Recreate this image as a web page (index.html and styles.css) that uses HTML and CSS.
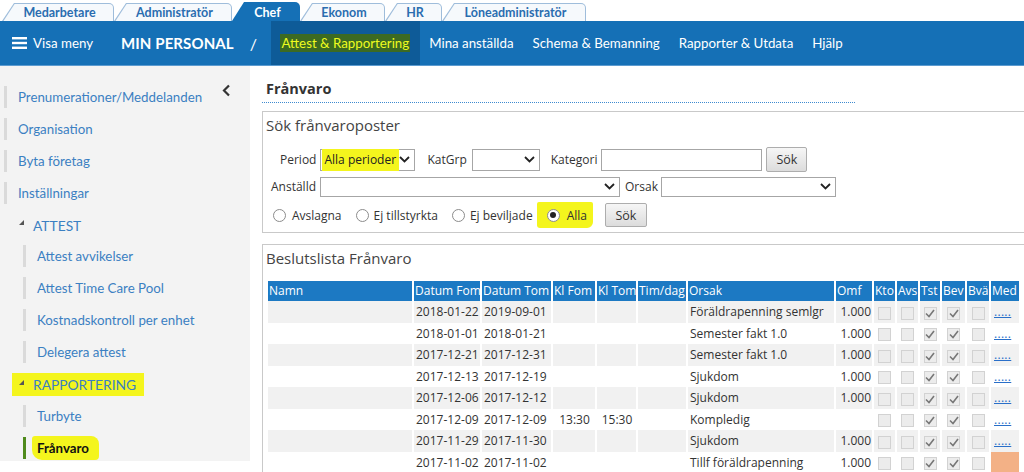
FILE: index.html
```html
<!DOCTYPE html>
<html lang="sv">
<head>
<meta charset="utf-8">
<title>Frånvaro</title>
<link rel="stylesheet" href="styles.css">
</head>
<body>
<div class="tabs">
  <div class="tab t-med"><div class="tab-face">Medarbetare</div></div>
  <div class="tab t-adm"><div class="tab-face">Administratör</div></div>
  <div class="tab t-chef active"><div class="tab-face">Chef</div></div>
  <div class="tab t-eko"><div class="tab-face">Ekonom</div></div>
  <div class="tab t-hr"><div class="tab-face">HR</div></div>
  <div class="tab t-lon"><div class="tab-face">Löneadministratör</div></div>
</div>
<nav class="nav">
  <div class="menu-btn">
    <svg class="burger" width="15" height="12" viewBox="0 0 15 12"><rect x="0" y="0" width="15" height="2.4" fill="#fff"/><rect x="0" y="4.8" width="15" height="2.4" fill="#fff"/><rect x="0" y="9.6" width="15" height="2.4" fill="#fff"/></svg>
    <span>Visa meny</span>
  </div>
  <div class="brand">MIN PERSONAL</div>
  <div class="slash">/</div>
  <ul class="nav-links">
    <li class="nav-item active"><span class="nav-hl">Attest &amp; Rapportering</span></li>
    <li class="nav-item">Mina anställda</li>
    <li class="nav-item">Schema &amp; Bemanning</li>
    <li class="nav-item">Rapporter &amp; Utdata</li>
    <li class="nav-item">Hjälp</li>
  </ul>
</nav>
<div class="main">
  <aside class="sidebar">
    <ul class="side-list">
      <li class="side-item">Prenumerationer/Meddelanden</li>
      <li class="side-item">Organisation</li>
      <li class="side-item">Byta företag</li>
      <li class="side-item">Inställningar</li>
      <li class="side-head"><span class="tri"></span>ATTEST</li>
      <li class="side-item sub">Attest avvikelser</li>
      <li class="side-item sub">Attest Time Care Pool</li>
      <li class="side-item sub">Kostnadskontroll per enhet</li>
      <li class="side-item sub">Delegera attest</li>
      <li class="side-head marked"><span class="tri"></span>RAPPORTERING</li>
      <li class="side-item sub">Turbyte</li>
      <li class="side-item sub current"><span class="cur-hl">Frånvaro</span></li>
    </ul>
    <div class="collapse">
      <svg width="9" height="13" viewBox="0 0 9 13"><polyline points="7,1.5 2,6.5 7,11.5" fill="none" stroke="#333" stroke-width="2.2"/></svg>
    </div>
  </aside>
  <section class="content">
    <h1 class="page-title">Frånvaro</h1>

    <div class="panel search">
      <div class="panel-title">Sök frånvaroposter</div>
      <div class="form-row r1">
        <label class="lbl">Period</label>
        <div class="sel w-period"><span class="sel-val"><span class="mark">Alla perioder</span></span><svg class="chev" width="11" height="7" viewBox="0 0 11 7"><polyline points="1,1 5.5,5.5 10,1" fill="none" stroke="#222" stroke-width="1.8"/></svg></div>
        <label class="lbl l-katgrp">KatGrp</label>
        <div class="sel w-katgrp"><span class="sel-val"></span><svg class="chev" width="11" height="7" viewBox="0 0 11 7"><polyline points="1,1 5.5,5.5 10,1" fill="none" stroke="#222" stroke-width="1.8"/></svg></div>
        <label class="lbl l-kat">Kategori</label>
        <div class="inp w-kat"></div>
        <button class="btn">Sök</button>
      </div>
      <div class="form-row r2">
        <label class="lbl">Anställd</label>
        <div class="sel w-anst"><span class="sel-val"></span><svg class="chev" width="11" height="7" viewBox="0 0 11 7"><polyline points="1,1 5.5,5.5 10,1" fill="none" stroke="#222" stroke-width="1.8"/></svg></div>
        <label class="lbl l-orsak">Orsak</label>
        <div class="sel w-orsak"><span class="sel-val"></span><svg class="chev" width="11" height="7" viewBox="0 0 11 7"><polyline points="1,1 5.5,5.5 10,1" fill="none" stroke="#222" stroke-width="1.8"/></svg></div>
      </div>
      <div class="form-row r3">
        <span class="radio-opt"><span class="radio"></span><span class="rlabel">Avslagna</span></span>
        <span class="radio-opt"><span class="radio"></span><span class="rlabel">Ej tillstyrkta</span></span>
        <span class="radio-opt"><span class="radio"></span><span class="rlabel">Ej beviljade</span></span>
        <span class="radio-opt marked-opt"><span class="radio on"></span><span class="rlabel">Alla</span></span>
        <button class="btn btn-r3">Sök</button>
      </div>
    </div>

    <div class="panel results">
      <div class="panel-title">Beslutslista Frånvaro</div>
      <table class="grid">
        <colgroup>
          <col class="c-namn"><col class="c-dfom"><col class="c-dtom"><col class="c-klf"><col class="c-klt"><col class="c-tim"><col class="c-ors"><col class="c-omf"><col class="c-kto"><col class="c-avs"><col class="c-tst"><col class="c-bev"><col class="c-bva"><col class="c-med">
        </colgroup>
        <thead>
          <tr><th>Namn</th><th>Datum Fom</th><th>Datum Tom</th><th>Kl Fom</th><th>Kl Tom</th><th>Tim/dag</th><th>Orsak</th><th>Omf</th><th>Kto</th><th>Avs</th><th>Tst</th><th>Bev</th><th>Bvä</th><th>Med</th></tr>
        </thead>
        <tbody>
          <tr class="odd"><td></td><td>2018-01-22</td><td>2019-09-01</td><td></td><td></td><td></td><td>Föräldrapenning semlgr</td><td class="num">1.000</td><td class="cb"><span class="chk"></span></td><td class="cb"><span class="chk"></span></td><td class="cb"><span class="chk on"><svg width="10" height="9" viewBox="0 0 10 9"><polyline points="1,4.5 4,7.5 9,1" fill="none" stroke="#777" stroke-width="1.6"/></svg></span></td><td class="cb"><span class="chk on"><svg width="10" height="9" viewBox="0 0 10 9"><polyline points="1,4.5 4,7.5 9,1" fill="none" stroke="#777" stroke-width="1.6"/></svg></span></td><td class="cb"><span class="chk"></span></td><td class="med"><a class="dots">.....</a></td></tr>
          <tr><td></td><td>2018-01-01</td><td>2018-01-21</td><td></td><td></td><td></td><td>Semester fakt 1.0</td><td class="num">1.000</td><td class="cb"><span class="chk"></span></td><td class="cb"><span class="chk"></span></td><td class="cb"><span class="chk on"><svg width="10" height="9" viewBox="0 0 10 9"><polyline points="1,4.5 4,7.5 9,1" fill="none" stroke="#777" stroke-width="1.6"/></svg></span></td><td class="cb"><span class="chk on"><svg width="10" height="9" viewBox="0 0 10 9"><polyline points="1,4.5 4,7.5 9,1" fill="none" stroke="#777" stroke-width="1.6"/></svg></span></td><td class="cb"><span class="chk"></span></td><td class="med"><a class="dots">.....</a></td></tr>
          <tr class="odd"><td></td><td>2017-12-21</td><td>2017-12-31</td><td></td><td></td><td></td><td>Semester fakt 1.0</td><td class="num">1.000</td><td class="cb"><span class="chk"></span></td><td class="cb"><span class="chk"></span></td><td class="cb"><span class="chk on"><svg width="10" height="9" viewBox="0 0 10 9"><polyline points="1,4.5 4,7.5 9,1" fill="none" stroke="#777" stroke-width="1.6"/></svg></span></td><td class="cb"><span class="chk on"><svg width="10" height="9" viewBox="0 0 10 9"><polyline points="1,4.5 4,7.5 9,1" fill="none" stroke="#777" stroke-width="1.6"/></svg></span></td><td class="cb"><span class="chk"></span></td><td class="med"><a class="dots">.....</a></td></tr>
          <tr><td></td><td>2017-12-13</td><td>2017-12-19</td><td></td><td></td><td></td><td>Sjukdom</td><td class="num">1.000</td><td class="cb"><span class="chk"></span></td><td class="cb"><span class="chk"></span></td><td class="cb"><span class="chk on"><svg width="10" height="9" viewBox="0 0 10 9"><polyline points="1,4.5 4,7.5 9,1" fill="none" stroke="#777" stroke-width="1.6"/></svg></span></td><td class="cb"><span class="chk on"><svg width="10" height="9" viewBox="0 0 10 9"><polyline points="1,4.5 4,7.5 9,1" fill="none" stroke="#777" stroke-width="1.6"/></svg></span></td><td class="cb"><span class="chk"></span></td><td class="med"><a class="dots">.....</a></td></tr>
          <tr class="odd"><td></td><td>2017-12-06</td><td>2017-12-12</td><td></td><td></td><td></td><td>Sjukdom</td><td class="num">1.000</td><td class="cb"><span class="chk"></span></td><td class="cb"><span class="chk"></span></td><td class="cb"><span class="chk on"><svg width="10" height="9" viewBox="0 0 10 9"><polyline points="1,4.5 4,7.5 9,1" fill="none" stroke="#777" stroke-width="1.6"/></svg></span></td><td class="cb"><span class="chk on"><svg width="10" height="9" viewBox="0 0 10 9"><polyline points="1,4.5 4,7.5 9,1" fill="none" stroke="#777" stroke-width="1.6"/></svg></span></td><td class="cb"><span class="chk"></span></td><td class="med"><a class="dots">.....</a></td></tr>
          <tr><td></td><td>2017-12-09</td><td>2017-12-09</td><td class="ctr">13:30</td><td class="ctr">15:30</td><td></td><td>Kompledig</td><td class="num"></td><td class="cb"><span class="chk"></span></td><td class="cb"><span class="chk"></span></td><td class="cb"><span class="chk on"><svg width="10" height="9" viewBox="0 0 10 9"><polyline points="1,4.5 4,7.5 9,1" fill="none" stroke="#777" stroke-width="1.6"/></svg></span></td><td class="cb"><span class="chk on"><svg width="10" height="9" viewBox="0 0 10 9"><polyline points="1,4.5 4,7.5 9,1" fill="none" stroke="#777" stroke-width="1.6"/></svg></span></td><td class="cb"><span class="chk"></span></td><td class="med"><a class="dots">.....</a></td></tr>
          <tr class="odd"><td></td><td>2017-11-29</td><td>2017-11-30</td><td></td><td></td><td></td><td>Sjukdom</td><td class="num">1.000</td><td class="cb"><span class="chk"></span></td><td class="cb"><span class="chk"></span></td><td class="cb"><span class="chk on"><svg width="10" height="9" viewBox="0 0 10 9"><polyline points="1,4.5 4,7.5 9,1" fill="none" stroke="#777" stroke-width="1.6"/></svg></span></td><td class="cb"><span class="chk on"><svg width="10" height="9" viewBox="0 0 10 9"><polyline points="1,4.5 4,7.5 9,1" fill="none" stroke="#777" stroke-width="1.6"/></svg></span></td><td class="cb"><span class="chk"></span></td><td class="med"><a class="dots">.....</a></td></tr>
          <tr><td></td><td>2017-11-02</td><td>2017-11-02</td><td></td><td></td><td></td><td>Tillf föräldrapenning</td><td class="num">1.000</td><td class="cb"><span class="chk"></span></td><td class="cb"><span class="chk"></span></td><td class="cb"><span class="chk on"><svg width="10" height="9" viewBox="0 0 10 9"><polyline points="1,4.5 4,7.5 9,1" fill="none" stroke="#777" stroke-width="1.6"/></svg></span></td><td class="cb"><span class="chk on"><svg width="10" height="9" viewBox="0 0 10 9"><polyline points="1,4.5 4,7.5 9,1" fill="none" stroke="#777" stroke-width="1.6"/></svg></span></td><td class="cb"><span class="chk"></span></td><td class="med warn"></td></tr>
        </tbody>
      </table>
    </div>
  </section>
</div>
</body>
</html>
```
FILE: styles.css
```css
* { box-sizing: border-box; }
html, body { margin: 0; padding: 0; }
body {
  width: 1024px;
  height: 472px;
  overflow: hidden;
  background: #fff;
  font-family: "Open Sans", "Noto Sans", sans-serif;
  color: #333;
}
ul { list-style: none; margin: 0; padding: 0; }

/* ---------- role tabs ---------- */
.tabs {
  display: flex;
  align-items: flex-end;
  height: 21px;
  padding-left: 2px;
  background: #fff;
}
.tab {
  height: 18px;
  background: #9fbddb;
  padding: 1px 1px 0 0;
  border-radius: 0 5px 0 0;
  clip-path: polygon(0 100%, 12px 0, 100% 0, 100% 100%);
}
.tab-face {
  height: 100%;
  background: #f6f9fc;
  border-radius: 0 4px 0 0;
  clip-path: polygon(1.5px 100%, 12.6px 0, 100% 0, 100% 100%);
  display: flex;
  align-items: center;
  justify-content: center;
  padding-left: 4px;
  font-family: Lato, "Open Sans", sans-serif;
  font-weight: 700;
  font-size: 12.5px;
  color: #2a6db0;
}
.tab.active { height: 19px; background: #1570b6; }
.tab.active .tab-face { background: #1570b6; color: #fff; }
.t-med { width: 112px; }
.t-adm { width: 118px; }
.t-chef { width: 68px; }
.t-eko { width: 85px; }
.t-hr { width: 57px; }
.t-lon { width: 144px; }

/* ---------- main nav ---------- */
.nav {
  display: flex;
  align-items: stretch;
  height: 45px;
  background: #1570b6;
  border-bottom: 1px solid #5c9bd0;
  color: #fff;
  font-family: Lato, "Open Sans", sans-serif;
  font-size: 13.3px;
}
.menu-btn {
  display: flex;
  align-items: center;
  padding-left: 12px;
  gap: 6px;
}
.burger { display: block; }
.brand {
  display: flex;
  align-items: center;
  margin-left: 28px;
  font-weight: 700;
  font-size: 15px;
  letter-spacing: 0.1px;
}
.slash {
  display: flex;
  align-items: center;
  margin-left: 16px;
  margin-right: 14px;
  font-size: 16px;
}
.nav-links { display: flex; }
.nav-item {
  display: flex;
  align-items: center;
  padding: 0 9.5px;
  white-space: nowrap;
}
.nav-item.active {
  background: #0e5b98;
  padding: 0 9.5px;
}
.nav-hl {
  background: #3c6a22;
  color: #eefc1e;
  padding: 1px 1px;
}

/* ---------- layout ---------- */
.main {
  display: flex;
  align-items: flex-start;
  height: 406px;
}
.sidebar {
  width: 250px;
  flex: none;
  display: flex;
  background: #f3f3f3;
  padding-top: 20px;
  padding-bottom: 2px;
  font-family: Lato, "Open Sans", sans-serif;
  font-size: 13.3px;
  color: #3b80c2;
}
.side-list { flex: 1; }
.side-item {
  display: flex;
  align-items: center;
  height: 22px;
  margin: 0 0 10px 4px;
  padding-left: 11px;
  border-left: 3px solid #dadada;
  white-space: nowrap;
}
.side-item.sub { margin-left: 23px; }
.side-item.current {
  border-left-color: #4f8a1c;
  margin-bottom: 0;
  color: #111;
  font-weight: 700;
  padding-left: 6px;
}
.cur-hl {
  background: #f4f51d;
  padding: 4px 10px 4px 5px;
  border-radius: 3px 8px 4px 10px;
}
.side-head {
  display: flex;
  align-items: center;
  height: 22px;
  margin: 2px 0 9px 19px;
  width: max-content;
  text-transform: uppercase;
  font-size: 13.8px;
}
.side-head.marked {
  background: #f4f51d;
  margin-left: 12px;
  padding: 0 8px 0 7px;
  height: 23px;
}
.tri {
  width: 0;
  height: 0;
  border-style: solid;
  border-width: 0 0 5px 5px;
  border-color: transparent transparent #555 transparent;
  margin-right: 9px;
  margin-top: -5px;
}
.collapse {
  width: 28px;
  margin-top: -2px;
  display: flex;
  justify-content: flex-start;
  align-items: flex-start;
}
.collapse svg { display: block; }

/* ---------- content ---------- */
.content {
  flex: 1;
  min-width: 0;
  overflow: hidden;
  padding: 13px 0 0 12px;
  height: 406px;
}
.page-title {
  margin: 0;
  width: 593px;
  padding: 0 0 3px 4px;
  line-height: 20px;
  font-size: 14.5px;
  font-weight: 700;
  color: #333;
  border-bottom: 1px dotted #3f8bd0;
}
.panel {
  border: 1px solid #c9c9c9;
  margin-right: -40px;
  padding: 3px 0 4px 3px;
}
.search { margin-top: 8px; padding-top: 3px; }
.results { margin-top: 11px; border-bottom: none; }
.panel-title {
  font-size: 15px;
  line-height: 20px;
  color: #444;
}

.form-row {
  display: flex;
  align-items: center;
  font-size: 12px;
  color: #333;
}
.r1 { height: 25px; margin-top: 12px; padding-left: 14px; }
.r2 { height: 21px; margin-top: 4px; padding-left: 5px; }
.r3 { height: 26px; margin-top: 5px; padding-left: 7px; }

.lbl { margin-right: 4px; white-space: nowrap; }
.l-katgrp { margin-left: 12px; margin-right: 5px; }
.l-kat { margin-left: 11px; }
.l-orsak { margin-left: 5px; margin-right: 3px; }

.sel {
  display: flex;
  align-items: center;
  justify-content: space-between;
  height: 22px;
  border: 1px solid #a6a6a6;
  background: #fff;
  padding: 0 4px 0 1px;
}
.r2 .sel { height: 20px; }
.sel-val { font-size: 12px; color: #222; }
.mark {
  background: #f4f51d;
  padding: 2px 3px 3px 2px;
}
.chev { display: block; flex: none; }
.w-period { width: 95px; }
.w-katgrp { width: 68px; }
.w-anst { width: 300px; }
.w-orsak { width: 175px; }
.inp {
  width: 161px;
  height: 22px;
  border: 1px solid #a6a6a6;
  background: #fff;
}
.btn {
  width: 41px;
  height: 25px;
  margin-left: 4px;
  border: 1px solid #adadad;
  border-radius: 2px;
  background: linear-gradient(#f6f6f6, #dcdcdc);
  font-family: "Open Sans", sans-serif;
  font-size: 12.5px;
  color: #333;
  padding: 0;
}
.btn-r3 { height: 24px; margin-left: 12px; width: 42px; }

.radio-opt {
  display: flex;
  align-items: center;
  height: 26px;
  margin-right: 14px;
}
.radio {
  width: 13px;
  height: 13px;
  border: 1px solid #8c8c8c;
  border-radius: 50%;
  background: #fff;
  margin-right: 6px;
  display: flex;
  align-items: center;
  justify-content: center;
}
.radio.on::after {
  content: "";
  width: 6px;
  height: 6px;
  border-radius: 50%;
  background: #222;
}
.rlabel { white-space: nowrap; }
.radio-opt:nth-child(2) .radio, .radio-opt:nth-child(3) .radio { margin-right: 5px; }
.marked-opt {
  background: #f4f51d;
  margin-left: -10px;
  padding: 0 6px 0 10px;
  margin-right: 0;
  border-radius: 2px 2px 6px 3px;
}
.marked-opt .radio { margin-right: 7px; }

/* ---------- grid ---------- */
.grid {
  margin-top: 13px;
  border-collapse: separate;
  border-spacing: 2px 0;
  table-layout: fixed;
  width: 755px;
  font-size: 12px;
  color: #333;
}
.c-namn { width: 144px; }
.c-dfom { width: 66px; }
.c-dtom { width: 69px; }
.c-klf { width: 42px; }
.c-klt { width: 39px; }
.c-tim { width: 48px; }
.c-ors { width: 146px; }
.c-omf { width: 36px; }
.c-kto { width: 21px; }
.c-avs { width: 21px; }
.c-tst { width: 20px; }
.c-bev { width: 23px; }
.c-bva { width: 22px; }
.c-med { width: 28px; }
.grid th {
  height: 20px;
  background: #1c79c3;
  color: #fff;
  font-weight: 400;
  text-align: left;
  padding: 0 0 0 1px;
  white-space: nowrap;
  overflow: hidden;
  line-height: 20px;
}
.grid td {
  height: 21.5px;
  padding: 0 1px 0 2px;
  white-space: nowrap;
  overflow: hidden;
  line-height: 21px;
}
.grid tr.odd td { background: #f1f1f1; }
.grid td.num { text-align: right; padding-right: 1px; }
.grid td.ctr { text-align: center; }
.grid td.cb { text-align: center; padding: 0; }
.chk {
  display: inline-flex;
  align-items: center;
  justify-content: center;
  width: 13px;
  height: 13px;
  vertical-align: middle;
  border: 1px solid #d2d2d2;
  background: #ececec;
}
.chk svg { display: block; }
.grid td.med { padding-left: 3px; }
.dots {
  color: #2a6fc9;
  text-decoration: underline;
  font-size: 12px;
  letter-spacing: 0.3px;
}
.grid td.warn { background: #f3b186; }
```
